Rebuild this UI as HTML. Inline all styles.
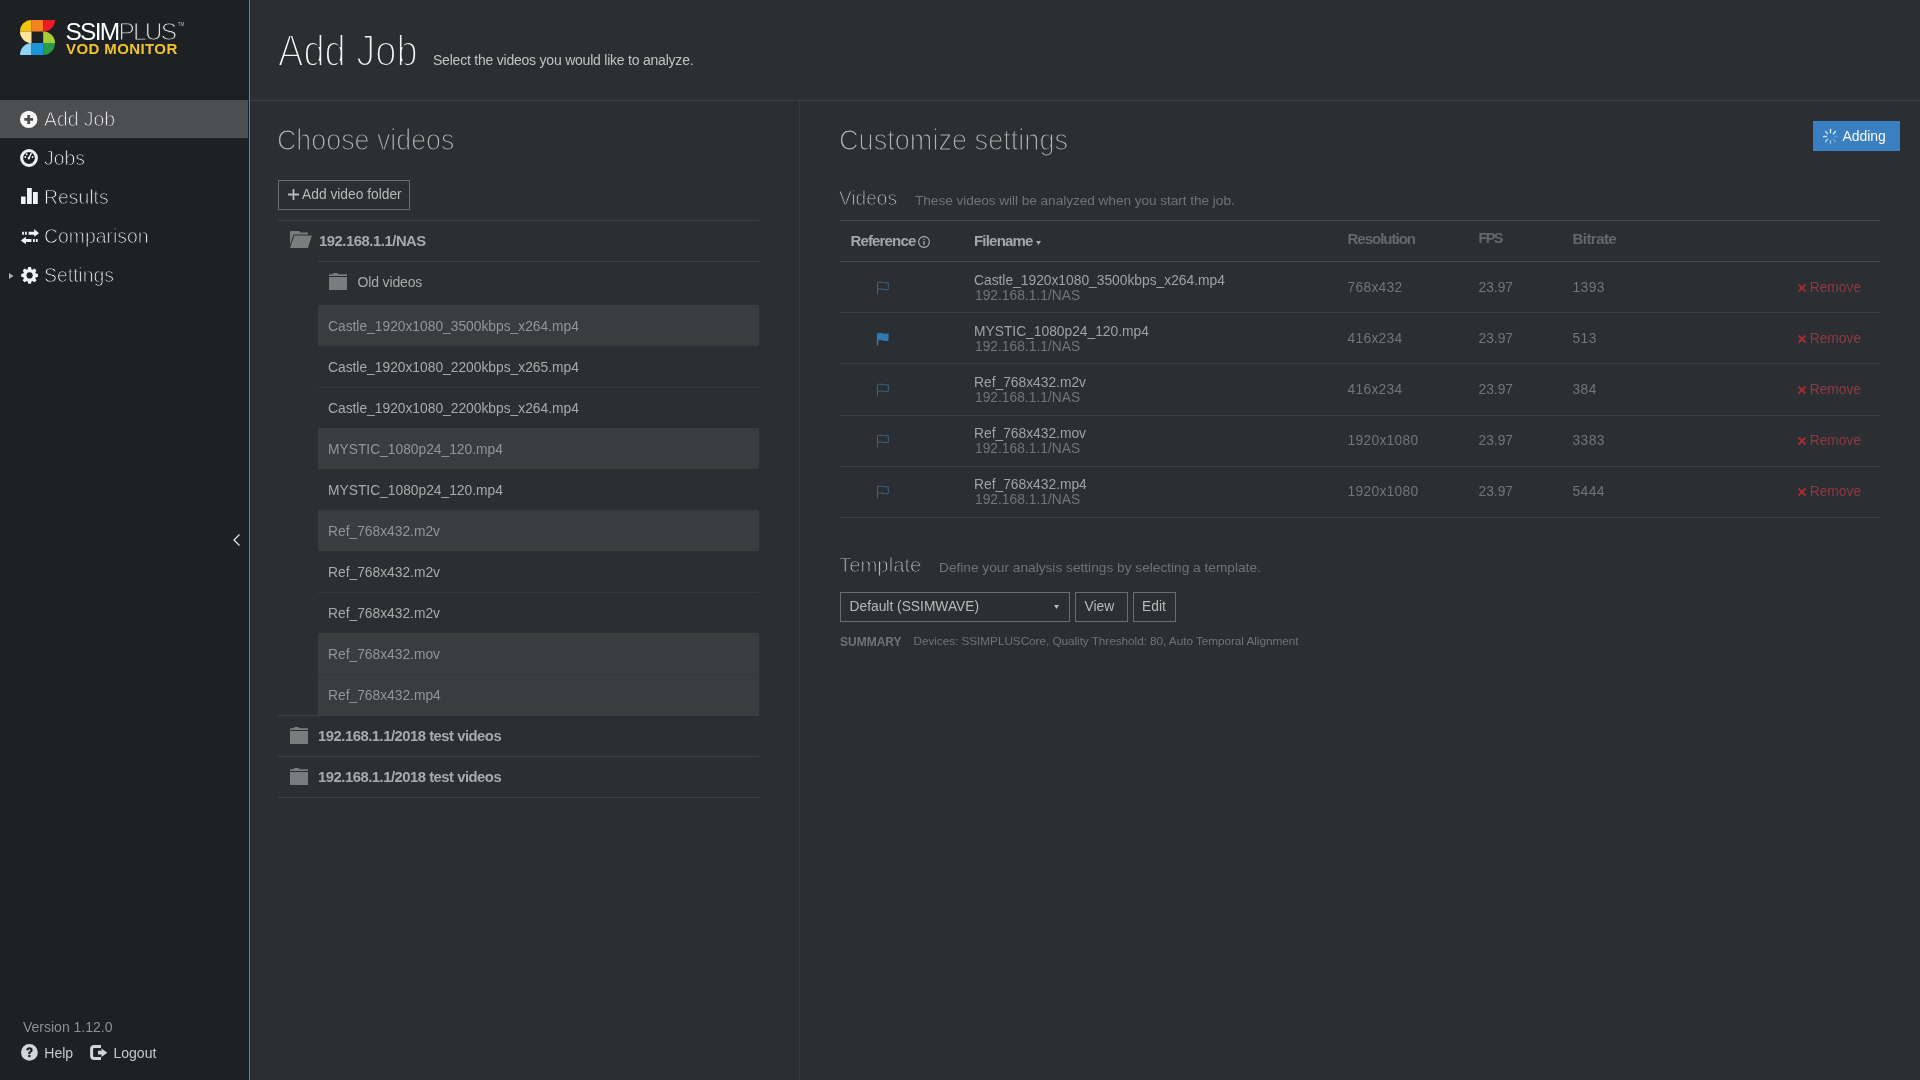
<!DOCTYPE html>
<html><head><meta charset="utf-8">
<style>
*{margin:0;padding:0;box-sizing:border-box}
html,body{width:1920px;height:1080px;overflow:hidden;background:#2b2e32;font-family:"Liberation Sans",sans-serif;-webkit-font-smoothing:antialiased}
.a{transform:translateZ(0)}
.a{position:absolute;white-space:nowrap;line-height:1}
.r{position:absolute}
.s{position:absolute;display:block}
</style></head><body>
<div class="r" style="left:0px;top:0px;width:248px;height:1080px;background:#1e2124;"></div>
<div class="r" style="left:248px;top:0px;width:1px;height:1080px;background:#0b2236;"></div>
<div class="r" style="left:249px;top:0px;width:1px;height:1080px;background:#5b8db8;"></div>
<div class="r" style="left:250px;top:0px;width:1px;height:1080px;background:#24282c;"></div>
<svg class="s" style="left:20px;top:20px" width="35" height="35" viewBox="0 0 35 35">
<path d="M11.5 0V11.5H0A11.5 11.5 0 0 1 11.5 0Z" fill="#f7c20c"/>
<rect x="11.5" y="0" width="11.7" height="11.5" fill="#f58220"/>
<path d="M23.2 0H35A11.8 11.8 0 0 1 23.2 11.8Z" fill="#ed1c24"/>
<path d="M0 11.5H11.5V23A11.5 11.5 0 0 1 0 11.5Z" fill="#fde49a"/>
<path d="M23.2 11.5A11.8 11.5 0 0 1 35 23H23.2Z" fill="#a6ce39"/>
<path d="M11.5 23V35H0A11.5 12 0 0 1 11.5 23Z" fill="#8fd3f4"/>
<rect x="11.5" y="23" width="11.7" height="12" fill="#1c94d5"/>
<path d="M23.2 23H35A11.8 12 0 0 1 23.2 35Z" fill="#2a9a48"/>
</svg>
<div class="a" style="left:65.5px;top:19.86px;font-size:24.5px;color:#fff;letter-spacing:-1.75px;"><span style="color:#ffffff">SSIM</span><span style="color:#e0e0e0;-webkit-text-stroke:1px #1e2124">PLUS</span></div>
<div class="a" style="left:177.8px;top:23.19px;font-size:4.5px;color:#bbbbbb;">TM</div>
<div class="a" style="left:66px;top:41.10px;font-size:15px;color:#f3c22f;font-weight:bold;letter-spacing:0.4px;">VOD MONITOR</div>
<div class="r" style="left:0px;top:100px;width:248px;height:38px;background:#4d4e50;"></div>
<div class="a" style="left:44.4px;top:108.84px;font-size:20.5px;color:#ffffff;letter-spacing:0px;-webkit-text-stroke:0.9px #4d4e50;transform:translateZ(0) scaleX(0.945);transform-origin:0 0;">Add Job</div>
<div class="a" style="left:44.4px;top:147.84px;font-size:20.5px;color:#ffffff;letter-spacing:0px;-webkit-text-stroke:0.9px #1e2124;transform:translateZ(0) scaleX(0.945);transform-origin:0 0;">Jobs</div>
<div class="a" style="left:44.4px;top:186.84px;font-size:20.5px;color:#ffffff;letter-spacing:0px;-webkit-text-stroke:0.9px #1e2124;transform:translateZ(0) scaleX(0.945);transform-origin:0 0;">Results</div>
<div class="a" style="left:44.4px;top:225.84px;font-size:20.5px;color:#ffffff;letter-spacing:0px;-webkit-text-stroke:0.9px #1e2124;transform:translateZ(0) scaleX(0.945);transform-origin:0 0;">Comparison</div>
<div class="a" style="left:44.4px;top:264.84px;font-size:20.5px;color:#ffffff;letter-spacing:0px;-webkit-text-stroke:0.9px #1e2124;transform:translateZ(0) scaleX(0.945);transform-origin:0 0;">Settings</div>
<svg class="s" style="left:19px;top:110px" width="20" height="20" viewBox="0 0 20 20">
<circle cx="9.7" cy="9.4" r="8.7" fill="#f6f6f6"/>
<path d="M8.3 5H11.1V8H14.1V10.8H11.1V13.9H8.3V10.8H5.3V8H8.3z" fill="#4d4e50"/></svg>
<svg class="s" style="left:19px;top:149px" width="20" height="20" viewBox="0 0 20 20">
<circle cx="10" cy="9" r="7.4" fill="none" stroke="#f2f2f2" stroke-width="3"/>
<path d="M9.6 9.6 L12.3 4.4" stroke="#f2f2f2" stroke-width="1.3" stroke-linecap="round"/>
<circle cx="9.9" cy="9.1" r="1.3" fill="#f2f2f2"/>
<circle cx="6.3" cy="8" r="0.95" fill="#f2f2f2"/><circle cx="7.6" cy="5.2" r="0.95" fill="#f2f2f2"/>
<circle cx="13.6" cy="8" r="0.95" fill="#f2f2f2"/></svg>
<svg class="s" style="left:20px;top:187px" width="19" height="18" viewBox="0 0 19 18">
<rect x="1" y="9.5" width="4.6" height="7.5" fill="#f2f2f2"/>
<rect x="7" y="1" width="4.8" height="16" fill="#f2f2f2"/>
<rect x="13" y="5" width="4.8" height="12" fill="#f2f2f2"/></svg>
<svg class="s" style="left:20px;top:228px" width="20" height="18" viewBox="0 0 20 18">
<path d="M2.1 3.7h1.8v3.1H2.1zM5 3.7h1.8v3.1H5zM8.6 3.7h5.6V1L19 5.3 14.2 8.8V6.8H8.6z" fill="#f2f2f2"/>
<path d="M0.8 12.5L5.9 8.8V11H11.4V13.9H5.9V16.3zM13 11h1.8v2.9H13zM15.9 11h1.8v2.9h-1.8z" fill="#f2f2f2"/></svg>
<svg class="s" style="left:20px;top:266px" width="19" height="19" viewBox="0 0 19 19">
<path d="M7.54 3.45 L8.31 1.00 L10.89 1.00 L11.66 3.45 L12.35 3.73 L14.62 2.54 L16.46 4.38 L15.27 6.65 L15.55 7.34 L18.00 8.11 L18.00 10.69 L15.55 11.46 L15.27 12.15 L16.46 14.42 L14.62 16.26 L12.35 15.07 L11.66 15.35 L10.89 17.80 L8.31 17.80 L7.54 15.35 L6.85 15.07 L4.58 16.26 L2.74 14.42 L3.93 12.15 L3.65 11.46 L1.20 10.69 L1.20 8.11 L3.65 7.34 L3.93 6.65 L2.74 4.38 L4.58 2.54 L6.85 3.73Z" fill="#f2f2f2"/><circle cx="9.6" cy="9.4" r="3.1" fill="#1e2124"/></svg>
<svg class="s" style="left:9px;top:273px" width="5" height="6" viewBox="0 0 5 6"><path d="M0 0L4.5 3L0 6Z" fill="#aeb0b2"/></svg>
<svg class="s" style="left:232px;top:533px" width="9" height="14" viewBox="0 0 9 14"><path d="M7.5 1.5L2 7l5.5 5.5" fill="none" stroke="#e0e0e0" stroke-width="1.3"/></svg>
<div class="a" style="left:23px;top:1020.35px;font-size:14px;color:#8e9092;letter-spacing:0.0px;">Version 1.12.0</div>
<svg class="s" style="left:21px;top:1044px" width="17" height="17" viewBox="0 0 17 17">
<circle cx="8.4" cy="8.4" r="8.4" fill="#d4d5d7"/>
<path d="M5.3 6.2C5.3 4.2 6.7 3.3 8.5 3.3 10.4 3.3 11.7 4.4 11.7 6 11.7 7.3 10.9 7.9 10 8.5 9.5 8.9 9.4 9.2 9.4 9.9H7.2C7.2 8.7 7.5 8.1 8.4 7.5 9.1 7 9.3 6.7 9.3 6.2 9.3 5.6 8.9 5.3 8.4 5.3 7.9 5.3 7.5 5.7 7.5 6.4Z" fill="#1e2124"/>
<rect x="7.2" y="10.9" width="2.3" height="2.2" fill="#1e2124"/></svg>
<div class="a" style="left:44.3px;top:1046.35px;font-size:14px;color:#c8c9cb;">Help</div>
<svg class="s" style="left:90px;top:1045px" width="18" height="15" viewBox="0 0 18 15">
<path d="M11 1.6H4.3Q1.6 1.6 1.6 4.3V10.7Q1.6 13.4 4.3 13.4H11" fill="none" stroke="#d4d5d7" stroke-width="3"/>
<path d="M8 5.8H11.5V3.5L17.3 7.7 11.5 12V9.5H8z" fill="#d4d5d7"/></svg>
<div class="a" style="left:113.5px;top:1046.35px;font-size:14px;color:#c8c9cb;">Logout</div>
<div class="a" style="left:277.5px;top:29.67px;font-size:43.5px;color:#f4f4f4;letter-spacing:0px;-webkit-text-stroke:2px #2b2e32;transform:translateZ(0) scaleX(0.875);transform-origin:0 0;">Add Job</div>
<div class="a" style="left:433px;top:52.95px;font-size:14px;color:#c2c3c5;letter-spacing:-0.22px;">Select the videos you would like to analyze.</div>
<div class="r" style="left:250px;top:100px;width:1670px;height:1px;background:#3c3f43;"></div>
<div class="r" style="left:799px;top:101px;width:1px;height:979px;background:#35383c;"></div>
<div class="a" style="left:277px;top:125.65px;font-size:29px;color:#b0b2b4;letter-spacing:0px;-webkit-text-stroke:1.2px #2b2e32;transform:translateZ(0) scaleX(0.925);transform-origin:0 0;">Choose videos</div>
<div class="r" style="left:278px;top:180px;width:132px;height:30px;background:transparent;border:1px solid #6b6d70;"></div>
<svg class="s" style="left:288px;top:189px" width="11" height="11" viewBox="0 0 11 11"><path d="M4.6 0h1.8v4.6H11v1.8H6.4V11H4.6V6.4H0V4.6h4.6z" fill="#b8babc"/></svg>
<div class="a" style="left:302px;top:188.12px;font-size:13.8px;color:#b8babc;">Add video folder</div>
<div class="r" style="left:278px;top:220px;width:481px;height:1px;background:#3c3f43;"></div>
<svg class="s" style="left:290px;top:231px" width="22" height="17" viewBox="0 0 22 17">
<path d="M0 1Q0 0 1 0H9.3L10.3 1.4H18V3.6H3.5L0.3 13.4H0Z" fill="#7b7c7e"/>
<path d="M4.3 4.5H21.9L18 17H0.1Z" fill="#7b7c7e"/></svg>
<div class="a" style="left:319px;top:233.97px;font-size:14.8px;color:#a8abae;font-weight:bold;letter-spacing:-0.45px;">192.168.1.1/NAS</div>
<div class="r" style="left:318px;top:261px;width:441px;height:1px;background:#3c3f43;"></div>
<svg class="s" style="left:329px;top:273px" width="18" height="17" viewBox="0 0 18 17">
<path d="M0 1.2H3.2Q4 0 5.5 0H7.5Q9 0 9.8 1.2H18V3.1H0Z" fill="#7b7c7e"/>
<rect x="0" y="4" width="18" height="13" fill="#7b7c7e"/></svg>
<div class="a" style="left:357.5px;top:275.35px;font-size:14px;color:#a8aaac;letter-spacing:-0.15px;">Old videos</div>
<div class="r" style="left:318px;top:305px;width:441px;height:41px;background:#3b3c40;"></div>
<div class="r" style="left:318px;top:428px;width:441px;height:41px;background:#3b3c40;"></div>
<div class="r" style="left:318px;top:510px;width:441px;height:41px;background:#3b3c40;"></div>
<div class="r" style="left:318px;top:633px;width:441px;height:41px;background:#3b3c40;"></div>
<div class="r" style="left:318px;top:674px;width:441px;height:41px;background:#3b3c40;"></div>
<div class="r" style="left:318px;top:387px;width:441px;height:1px;background:#36393d;"></div>
<div class="r" style="left:318px;top:592px;width:441px;height:1px;background:#36393d;"></div>
<div class="r" style="left:318px;top:674px;width:441px;height:1px;background:#37383c;"></div>
<div class="a" style="left:328px;top:320.32px;font-size:13.8px;color:#939597;">Castle_1920x1080_3500kbps_x264.mp4</div>
<div class="a" style="left:328px;top:361.32px;font-size:13.8px;color:#a9abad;">Castle_1920x1080_2200kbps_x265.mp4</div>
<div class="a" style="left:328px;top:402.32px;font-size:13.8px;color:#a9abad;">Castle_1920x1080_2200kbps_x264.mp4</div>
<div class="a" style="left:328px;top:443.32px;font-size:13.8px;color:#939597;">MYSTIC_1080p24_120.mp4</div>
<div class="a" style="left:328px;top:484.32px;font-size:13.8px;color:#a9abad;">MYSTIC_1080p24_120.mp4</div>
<div class="a" style="left:328px;top:525.32px;font-size:13.8px;color:#939597;">Ref_768x432.m2v</div>
<div class="a" style="left:328px;top:566.32px;font-size:13.8px;color:#a9abad;">Ref_768x432.m2v</div>
<div class="a" style="left:328px;top:607.32px;font-size:13.8px;color:#a9abad;">Ref_768x432.m2v</div>
<div class="a" style="left:328px;top:648.32px;font-size:13.8px;color:#939597;">Ref_768x432.mov</div>
<div class="a" style="left:328px;top:689.32px;font-size:13.8px;color:#939597;">Ref_768x432.mp4</div>
<div class="r" style="left:278px;top:715px;width:481px;height:1px;background:#3c3f43;"></div>
<svg class="s" style="left:290px;top:727px" width="18" height="17" viewBox="0 0 18 17">
<path d="M0 1.2H3.2Q4 0 5.5 0H7.5Q9 0 9.8 1.2H18V3.1H0Z" fill="#7b7c7e"/>
<rect x="0" y="4" width="18" height="13" fill="#7b7c7e"/></svg>
<div class="a" style="left:318px;top:728.97px;font-size:14.8px;color:#a8abae;font-weight:bold;letter-spacing:-0.48px;">192.168.1.1/2018 test videos</div>
<div class="r" style="left:278px;top:756px;width:481px;height:1px;background:#3c3f43;"></div>
<svg class="s" style="left:290px;top:768px" width="18" height="17" viewBox="0 0 18 17">
<path d="M0 1.2H3.2Q4 0 5.5 0H7.5Q9 0 9.8 1.2H18V3.1H0Z" fill="#7b7c7e"/>
<rect x="0" y="4" width="18" height="13" fill="#7b7c7e"/></svg>
<div class="a" style="left:318px;top:769.97px;font-size:14.8px;color:#a8abae;font-weight:bold;letter-spacing:-0.48px;">192.168.1.1/2018 test videos</div>
<div class="r" style="left:278px;top:797px;width:481px;height:1px;background:#3c3f43;"></div>
<div class="a" style="left:839px;top:125.65px;font-size:29px;color:#b0b2b4;letter-spacing:0px;-webkit-text-stroke:1.2px #2b2e32;transform:translateZ(0) scaleX(0.935);transform-origin:0 0;">Customize settings</div>
<div class="r" style="left:1813px;top:121px;width:87px;height:30px;background:#3a7fbf;"></div>
<svg class="s" style="left:1822px;top:128px" width="17" height="17" viewBox="-8.5 -8.5 17 17">
<g stroke-width="1.4" stroke-linecap="round">
<path d="M0-7V-4" stroke="#e8f2fb" transform="rotate(0)"/>
<path d="M0-7V-4" stroke="#d8e8f6" transform="rotate(45)"/>
<path d="M0-7V-4" stroke="#5f9bd0" transform="rotate(90)"/>
<path d="M0-7V-4" stroke="#6aa3d4" transform="rotate(135)"/>
<path d="M0-7V-4" stroke="#8fbbe0" transform="rotate(180)"/>
<path d="M0-7V-4" stroke="#a8cbe8" transform="rotate(225)"/>
<path d="M0-7V-4" stroke="#d0e3f4" transform="rotate(270)"/>
<path d="M0-7V-4" stroke="#c4dcf1" transform="rotate(315)"/>
</g></svg>
<div class="a" style="left:1842.5px;top:129.35px;font-size:14px;color:#f4f8fc;letter-spacing:-0.05px;">Adding</div>
<div class="a" style="left:838.8px;top:187.84px;font-size:20.5px;color:#c6c8ca;letter-spacing:0px;-webkit-text-stroke:0.9px #2b2e32;transform:translateZ(0) scaleX(0.93);transform-origin:0 0;">Videos</div>
<div class="a" style="left:915px;top:194.40px;font-size:13.7px;color:#707377;letter-spacing:-0.07px;">These videos will be analyzed when you start the job.</div>
<div class="r" style="left:840px;top:220px;width:1040px;height:1px;background:#45484c;"></div>
<div class="a" style="left:850.5px;top:232.80px;font-size:15px;color:#a4a7aa;font-weight:bold;letter-spacing:-0.85px;">Reference</div>
<svg class="s" style="left:918px;top:236px" width="12" height="12" viewBox="0 0 12 12">
<circle cx="6" cy="6" r="5.4" fill="none" stroke="#b0b2b4" stroke-width="1.1"/>
<rect x="5.4" y="5" width="1.2" height="4" fill="#b0b2b4"/><rect x="5.4" y="2.8" width="1.2" height="1.2" fill="#b0b2b4"/></svg>
<div class="a" style="left:974px;top:232.80px;font-size:15px;color:#a4a7aa;font-weight:bold;letter-spacing:-0.8px;">Filename</div>
<svg class="s" style="left:1036px;top:241px" width="5" height="4" viewBox="0 0 5 4"><path d="M0 0H5L2.5 4Z" fill="#a8aaac"/></svg>
<div class="a" style="left:1347.5px;top:230.80px;font-size:15px;color:#65686b;font-weight:bold;letter-spacing:-1.0px;">Resolution</div>
<div class="a" style="left:1478.5px;top:231.22px;font-size:14.5px;color:#65686b;font-weight:bold;letter-spacing:-1.6px;">FPS</div>
<div class="a" style="left:1572.5px;top:230.80px;font-size:15px;color:#65686b;font-weight:bold;letter-spacing:-0.55px;">Bitrate</div>
<div class="r" style="left:840px;top:261px;width:1040px;height:1px;background:#45484c;"></div>
<svg class="s" style="left:876px;top:281px" width="14" height="14" viewBox="0 0 14 14">
<path d="M1.5 13.5V1.5" stroke="#3b6180" stroke-width="1.1"/>
<path d="M1.5 1.5Q4 0.6 6.8 1.5T12.3 1.5V8.3Q9.8 9.2 7 8.3T1.5 8.3" fill="none" stroke="#3b6180" stroke-width="1"/></svg>
<div class="a" style="left:974px;top:274.32px;font-size:13.8px;color:#a0a3a6;">Castle_1920x1080_3500kbps_x264.mp4</div>
<div class="a" style="left:975px;top:289.32px;font-size:13.8px;color:#727578;">192.168.1.1/NAS</div>
<div class="a" style="left:1347.5px;top:281.32px;font-size:13.8px;color:#727578;letter-spacing:0.3px;">768x432</div>
<div class="a" style="left:1478.5px;top:281.32px;font-size:13.8px;color:#727578;">23.97</div>
<div class="a" style="left:1572.5px;top:281.32px;font-size:13.8px;color:#727578;letter-spacing:0.4px;">1393</div>
<svg class="s" style="left:1797px;top:283px" width="10" height="10" viewBox="0 0 10 10"><path d="M1.5 1.5L8.5 8.5M8.5 1.5L1.5 8.5" stroke="#a52c33" stroke-width="2"/></svg>
<div class="a" style="left:1809.7px;top:281.32px;font-size:13.8px;color:#8f3a43;">Remove</div>
<div class="r" style="left:840px;top:312px;width:1040px;height:1px;background:#3a3d41;"></div>
<svg class="s" style="left:876px;top:332px" width="14" height="14" viewBox="0 0 14 14">
<path d="M1.5 13.5V1.5" stroke="#2f78b2" stroke-width="1.4"/>
<path d="M1.5 1.2Q4 0.2 6.8 1.2T12.5 1.2V8.6Q9.8 9.6 7 8.6T1.5 8.6Z" fill="#2f78b2"/></svg>
<div class="a" style="left:974px;top:325.32px;font-size:13.8px;color:#a0a3a6;">MYSTIC_1080p24_120.mp4</div>
<div class="a" style="left:975px;top:340.32px;font-size:13.8px;color:#727578;">192.168.1.1/NAS</div>
<div class="a" style="left:1347.5px;top:332.32px;font-size:13.8px;color:#727578;letter-spacing:0.3px;">416x234</div>
<div class="a" style="left:1478.5px;top:332.32px;font-size:13.8px;color:#727578;">23.97</div>
<div class="a" style="left:1572.5px;top:332.32px;font-size:13.8px;color:#727578;letter-spacing:0.4px;">513</div>
<svg class="s" style="left:1797px;top:334px" width="10" height="10" viewBox="0 0 10 10"><path d="M1.5 1.5L8.5 8.5M8.5 1.5L1.5 8.5" stroke="#a52c33" stroke-width="2"/></svg>
<div class="a" style="left:1809.7px;top:332.32px;font-size:13.8px;color:#8f3a43;">Remove</div>
<div class="r" style="left:840px;top:363px;width:1040px;height:1px;background:#3a3d41;"></div>
<svg class="s" style="left:876px;top:383px" width="14" height="14" viewBox="0 0 14 14">
<path d="M1.5 13.5V1.5" stroke="#3b6180" stroke-width="1.1"/>
<path d="M1.5 1.5Q4 0.6 6.8 1.5T12.3 1.5V8.3Q9.8 9.2 7 8.3T1.5 8.3" fill="none" stroke="#3b6180" stroke-width="1"/></svg>
<div class="a" style="left:974px;top:376.32px;font-size:13.8px;color:#a0a3a6;">Ref_768x432.m2v</div>
<div class="a" style="left:975px;top:391.32px;font-size:13.8px;color:#727578;">192.168.1.1/NAS</div>
<div class="a" style="left:1347.5px;top:383.32px;font-size:13.8px;color:#727578;letter-spacing:0.3px;">416x234</div>
<div class="a" style="left:1478.5px;top:383.32px;font-size:13.8px;color:#727578;">23.97</div>
<div class="a" style="left:1572.5px;top:383.32px;font-size:13.8px;color:#727578;letter-spacing:0.4px;">384</div>
<svg class="s" style="left:1797px;top:385px" width="10" height="10" viewBox="0 0 10 10"><path d="M1.5 1.5L8.5 8.5M8.5 1.5L1.5 8.5" stroke="#a52c33" stroke-width="2"/></svg>
<div class="a" style="left:1809.7px;top:383.32px;font-size:13.8px;color:#8f3a43;">Remove</div>
<div class="r" style="left:840px;top:415px;width:1040px;height:1px;background:#3a3d41;"></div>
<svg class="s" style="left:876px;top:434px" width="14" height="14" viewBox="0 0 14 14">
<path d="M1.5 13.5V1.5" stroke="#3b6180" stroke-width="1.1"/>
<path d="M1.5 1.5Q4 0.6 6.8 1.5T12.3 1.5V8.3Q9.8 9.2 7 8.3T1.5 8.3" fill="none" stroke="#3b6180" stroke-width="1"/></svg>
<div class="a" style="left:974px;top:427.32px;font-size:13.8px;color:#a0a3a6;">Ref_768x432.mov</div>
<div class="a" style="left:975px;top:442.32px;font-size:13.8px;color:#727578;">192.168.1.1/NAS</div>
<div class="a" style="left:1347.5px;top:434.32px;font-size:13.8px;color:#727578;letter-spacing:0.3px;">1920x1080</div>
<div class="a" style="left:1478.5px;top:434.32px;font-size:13.8px;color:#727578;">23.97</div>
<div class="a" style="left:1572.5px;top:434.32px;font-size:13.8px;color:#727578;letter-spacing:0.4px;">3383</div>
<svg class="s" style="left:1797px;top:436px" width="10" height="10" viewBox="0 0 10 10"><path d="M1.5 1.5L8.5 8.5M8.5 1.5L1.5 8.5" stroke="#a52c33" stroke-width="2"/></svg>
<div class="a" style="left:1809.7px;top:434.32px;font-size:13.8px;color:#8f3a43;">Remove</div>
<div class="r" style="left:840px;top:466px;width:1040px;height:1px;background:#3a3d41;"></div>
<svg class="s" style="left:876px;top:485px" width="14" height="14" viewBox="0 0 14 14">
<path d="M1.5 13.5V1.5" stroke="#3b6180" stroke-width="1.1"/>
<path d="M1.5 1.5Q4 0.6 6.8 1.5T12.3 1.5V8.3Q9.8 9.2 7 8.3T1.5 8.3" fill="none" stroke="#3b6180" stroke-width="1"/></svg>
<div class="a" style="left:974px;top:478.32px;font-size:13.8px;color:#a0a3a6;">Ref_768x432.mp4</div>
<div class="a" style="left:975px;top:493.32px;font-size:13.8px;color:#727578;">192.168.1.1/NAS</div>
<div class="a" style="left:1347.5px;top:485.32px;font-size:13.8px;color:#727578;letter-spacing:0.3px;">1920x1080</div>
<div class="a" style="left:1478.5px;top:485.32px;font-size:13.8px;color:#727578;">23.97</div>
<div class="a" style="left:1572.5px;top:485.32px;font-size:13.8px;color:#727578;letter-spacing:0.4px;">5444</div>
<svg class="s" style="left:1797px;top:487px" width="10" height="10" viewBox="0 0 10 10"><path d="M1.5 1.5L8.5 8.5M8.5 1.5L1.5 8.5" stroke="#a52c33" stroke-width="2"/></svg>
<div class="a" style="left:1809.7px;top:485.32px;font-size:13.8px;color:#8f3a43;">Remove</div>
<div class="r" style="left:840px;top:517px;width:1040px;height:1px;background:#3a3d41;"></div>
<div class="a" style="left:839.3px;top:554.84px;font-size:20.5px;color:#c6c8ca;letter-spacing:0px;-webkit-text-stroke:0.9px #2b2e32;transform:translateZ(0) scaleX(0.99);transform-origin:0 0;">Template</div>
<div class="a" style="left:939px;top:561.40px;font-size:13.7px;color:#707377;letter-spacing:0.0px;">Define your analysis settings by selecting a template.</div>
<div class="r" style="left:840px;top:592px;width:230px;height:30px;background:transparent;border:1px solid #6b6d70;"></div>
<div class="a" style="left:849.5px;top:600.32px;font-size:13.8px;color:#b8babc;">Default (SSIMWAVE)</div>
<svg class="s" style="left:1054px;top:605px" width="5" height="4" viewBox="0 0 5 4"><path d="M0 0H5L2.5 4Z" fill="#b8babc"/></svg>
<div class="r" style="left:1075px;top:592px;width:53px;height:30px;background:transparent;border:1px solid #6b6d70;"></div>
<div class="a" style="left:1084.5px;top:600.32px;font-size:13.8px;color:#b8babc;">View</div>
<div class="r" style="left:1133px;top:592px;width:43px;height:30px;background:transparent;border:1px solid #6b6d70;"></div>
<div class="a" style="left:1142px;top:600.32px;font-size:13.8px;color:#b8babc;">Edit</div>
<div class="a" style="left:840px;top:636.04px;font-size:12px;color:#707377;font-weight:bold;">SUMMARY</div>
<div class="a" style="left:913.5px;top:636.21px;font-size:11.8px;color:#707377;letter-spacing:-0.06px;">Devices: SSIMPLUSCore, Quality Threshold: 80, Auto Temporal Alignment</div>
</body></html>
